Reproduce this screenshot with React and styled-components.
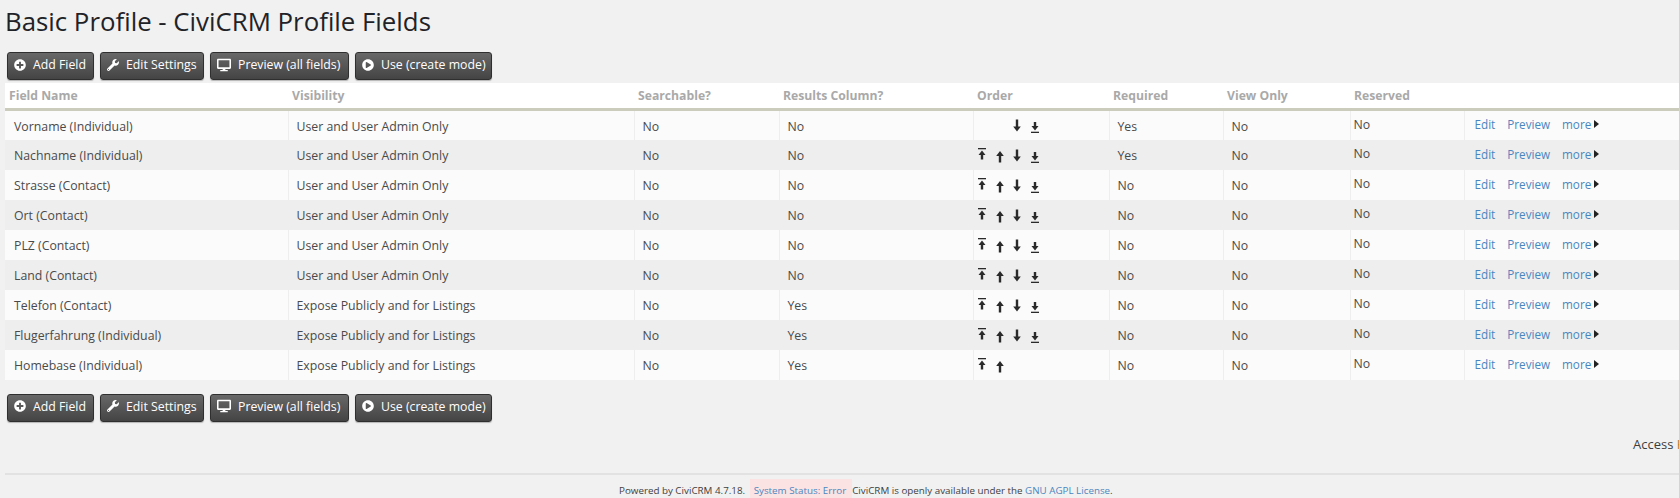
import React from 'react';
import styled, { createGlobalStyle } from 'styled-components';
import { FaPlusCircle, FaWrench, FaDesktop, FaPlayCircle } from 'react-icons/fa';

const Global = createGlobalStyle`
  html, body { margin: 0; padding: 0; background: #f1f1f1; overflow: hidden; }
  body { font-family: "Open Sans", "Noto Sans", sans-serif; font-size: 12px; color: #3e3e3e; }
`;
const Page = styled.div`
  width: 1760px;
  height: 498px;
  padding: 0 0 0 5px;
  box-sizing: border-box;
  overflow: hidden;
`;
const Title = styled.h1`
  margin: 0;
  padding-top: 5px;
  height: 52px;
  box-sizing: border-box;
  font-size: 25.8px;
  line-height: 33px;
  font-weight: 400;
  color: #1f2328;
`;
const Toolbar = styled.div`
  display: flex;
  gap: 6px;
  padding-left: 2px;
  height: 31px;
  box-sizing: border-box;
`;
const Btn = styled.a`
  display: flex;
  align-items: center;
  gap: 7px;
  width: ${p => p.$w}px;
  height: 28px;
  box-sizing: border-box;
  padding: 0 0 3px 6px;
  border: 1px solid #2f2f2f;
  border-radius: 3px;
  background: linear-gradient(#686868, #444444);
  color: #fff;
  font-size: 12.3px;
  white-space: nowrap;
  box-shadow: 0 1px 1px rgba(0,0,0,.25);
  svg { flex: none; }
`;
const Table = styled.table`
  border-collapse: collapse;
  table-layout: fixed;
  width: 1755px;
`;
const Head = styled.th`
  background: #fff;
  height: 25px;
  box-sizing: content-box;
  padding: 0 0 0 4px;
  text-align: left;
  font-size: 12.2px;
  font-weight: 700;
  color: #a9a9a9;
  border-bottom: 3px solid #ccccbc;
`;
const Row = styled.tr`
  background: ${p => (p.$odd ? '#fbfbfb' : '#eeeeee')};
`;
const Cell = styled.td`
  height: 30px;
  padding: ${p => (p.$first ? '2px 0 0 9px' : '2px 0 0 8px')};
  box-sizing: border-box;
  font-size: 12.3px;
  color: #4a4a4a;
  border-left: ${p => (p.$first ? '0' : '1px solid #eeeeee')};
  white-space: nowrap;
`;
const RaisedCell = styled(Cell)`
  padding: 0 0 2px ${p => p.$pl}px;
`;
const OrderCell = styled(Cell)`
  padding: 0 0 0 3px;
`;
const Arrows = styled.div`
  display: grid;
  grid-template-columns: 18px 17px 18px 17px;
  height: 16px;
`;
const Actions = styled.div`
  display: flex;
  align-items: center;
  gap: 12px;
  font-size: 11.7px;
`;
const Link = styled.a`
  color: #4a86c0;
`;
const More = styled.span`
  display: inline-flex;
  align-items: center;
  gap: 3px;
  color: #4a86c0;
`;
const Caret = styled.i`
  width: 0; height: 0;
  border-left: 5px solid #222;
  border-top: 4px solid transparent;
  border-bottom: 4px solid transparent;
`;
const BottomBar = styled(Toolbar)`
  margin-top: 14px;
`;
const AccessLine = styled.div`
  margin-top: 9px;
  padding-left: 1628px;
  height: 39px;
  line-height: 20px;
  font-size: 13px;
  color: #3e3e3e;
  white-space: nowrap;
`;
const Key = styled.span`
  color: #c07a20;
`;
const Footer = styled.div`
  border-top: 2px solid #e2e2e2;
  padding-top: 4px;
  width: 1755px;
`;
const FooterLine = styled.div`
  display: flex;
  padding-left: 614px;
  font-size: 9.8px;
  line-height: 24px;
  color: #3e3e3e;
  white-space: pre;
`;
const Status = styled.a`
  background: #fbe3e4;
  color: #4a86c0;
  padding: 0 6px 0 4px;
  margin: 0 0 0 2px;
`;

const paths = {
  top: <><rect x="1" y="1" width="8" height="1.3" /><path d="M5 3.5 L8.5 8 H6.2 V12.5 H3.8 V8 H1.5 Z" /></>,
  up: <path d="M5 4 L8.8 9 H6.2 V15.5 H3.8 V9 H1.2 Z" />,
  down: <path d="M5 14.5 L8.8 9.5 H6.2 V2.5 H3.8 V9.5 H1.2 Z" />,
  bottom: <><path d="M5 13.5 L8.5 9 H6.2 V5 H3.8 V9 H1.5 Z" /><rect x="1" y="14.7" width="8" height="1.3" /></>,
};
const Arrow = ({ kind }) => (
  <svg width="10" height="16" viewBox="0 0 10 16" fill="#2a2a2a">{paths[kind]}</svg>
);

const rows = [
  ['Vorname (Individual)', 'User and User Admin Only', 'No', 'No', 'first', 'Yes'],
  ['Nachname (Individual)', 'User and User Admin Only', 'No', 'No', 'all', 'Yes'],
  ['Strasse (Contact)', 'User and User Admin Only', 'No', 'No', 'all', 'No'],
  ['Ort (Contact)', 'User and User Admin Only', 'No', 'No', 'all', 'No'],
  ['PLZ (Contact)', 'User and User Admin Only', 'No', 'No', 'all', 'No'],
  ['Land (Contact)', 'User and User Admin Only', 'No', 'No', 'all', 'No'],
  ['Telefon (Contact)', 'Expose Publicly and for Listings', 'No', 'Yes', 'all', 'No'],
  ['Flugerfahrung (Individual)', 'Expose Publicly and for Listings', 'No', 'Yes', 'all', 'No'],
  ['Homebase (Individual)', 'Expose Publicly and for Listings', 'No', 'Yes', 'last', 'No'],
];
const cols = [283, 346, 145, 194, 136, 114, 127, 114, 296];
const heads = ['Field Name', 'Visibility', 'Searchable?', 'Results Column?', 'Order', 'Required', 'View Only', 'Reserved', ''];

const Buttons = ({ as: Bar }) => (
  <Bar>
    <Btn $w={87}><FaPlusCircle size={12} />Add Field</Btn>
    <Btn $w={104}><FaWrench size={12} />Edit Settings</Btn>
    <Btn $w={139}><FaDesktop size={14} />Preview (all fields)</Btn>
    <Btn $w={137}><FaPlayCircle size={12} />Use (create mode)</Btn>
  </Bar>
);

export default function App() {
  return (
    <Page>
      <Global />
      <Title>Basic Profile - CiviCRM Profile Fields</Title>
      <Buttons as={Toolbar} />
      <Table>
        <colgroup>{cols.map((w, i) => <col key={i} style={{ width: w }} />)}</colgroup>
        <thead>
          <tr>{heads.map((h, i) => <Head key={i}>{h}</Head>)}</tr>
        </thead>
        <tbody>
          {rows.map((r, i) => (
            <Row key={r[0]} $odd={i % 2 === 0}>
              <Cell $first>{r[0]}</Cell>
              <Cell>{r[1]}</Cell>
              <Cell>{r[2]}</Cell>
              <Cell>{r[3]}</Cell>
              <OrderCell>
                <Arrows>
                  {r[4] === 'first' ? <><span /><span /></> : <><Arrow kind="top" /><Arrow kind="up" /></>}
                  {r[4] !== 'last' && <><Arrow kind="down" /><Arrow kind="bottom" /></>}
                </Arrows>
              </OrderCell>
              <Cell>{r[5]}</Cell>
              <Cell>No</Cell>
              <RaisedCell $pl={3}>No</RaisedCell>
              <RaisedCell $pl={10}>
                <Actions>
                  <Link>Edit</Link>
                  <Link>Preview</Link>
                  <More>more<Caret /></More>
                </Actions>
              </RaisedCell>
            </Row>
          ))}
        </tbody>
      </Table>
      <Buttons as={BottomBar} />
      <AccessLine>Access <Key>K</Key>eys:</AccessLine>
      <Footer>
        <FooterLine>
          Powered by CiviCRM 4.7.18. <Status>System Status: Error</Status>CiviCRM is openly available under the <Link>GNU AGPL License</Link>.
        </FooterLine>
      </Footer>
    </Page>
  );
}
